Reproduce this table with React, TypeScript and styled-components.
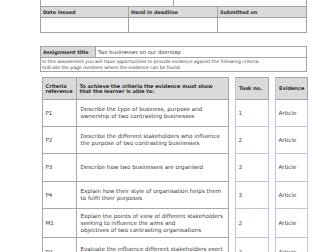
import React from 'react';
import styled, { createGlobalStyle } from 'styled-components';

const GlobalStyle = createGlobalStyle`
    html, body {
        margin: 0;
        padding: 0;
        background: #ffffff;
    }
    body {
        font-family: 'DejaVu Sans', Verdana, 'Liberation Sans', sans-serif;
        color: #333333;
        overflow: hidden;
    }
`;

interface ICriteria {
    code: string;
    text: string[];
    task: string;
    evidence: string;
}

const criteria: ICriteria[] = [
    { code: 'P1', text: ['Describe the type of business, purpose and', 'ownership of two contrasting businesses'], task: '1', evidence: 'Article' },
    { code: 'P2', text: ['Describe the different stakeholders who influence', 'the purpose of two contrasting businesses'], task: '2', evidence: 'Article' },
    { code: 'P3', text: ['Describe how two businesses are organised'], task: '3', evidence: 'Article' },
    { code: 'P4', text: ['Explain how their style of organisation helps them', 'to fulfil their purposes'], task: '3', evidence: 'Article' },
    {
        code: 'M1',
        text: ['Explain the points of view of different stakeholders', 'seeking to influence the aims and', 'objectives of two contrasting organisations'],
        task: '2',
        evidence: 'Article',
    },
    { code: 'D1', text: ['Evaluate the influence different stakeholders exert', 'on a business'], task: '2', evidence: 'Article' },
];

const ROWS = '22px 27px 27px 28px 27px 29px 30px';

export default function App() {
    return (
        <Page>
            <GlobalStyle />
            <FormGrid cols="133px 133px" rows="7px">
                <FormCell />
                <FormCell />
            </FormGrid>
            <FormGrid cols="88px 89px 89px" rows="11px 15px">
                <FormCell head>Date issued</FormCell>
                <FormCell head>Hand in deadline</FormCell>
                <FormCell head>Submitted on</FormCell>
                <FormCell />
                <FormCell />
                <FormCell />
            </FormGrid>

            <AssignmentBox>
                <AssignmentLabel>Assignment title</AssignmentLabel>
                <AssignmentValue>Two businesses on our doorstep</AssignmentValue>
                <AssignmentNote>
                    In this assessment you will have opportunities to provide evidence against the following criteria.
                    <br />
                    Indicate the page numbers where the evidence can be found.
                </AssignmentNote>
            </AssignmentBox>

            <CriteriaArea>
                <CriteriaGrid cols="34px 152px" tone="gray">
                    <HeadCell>
                        Criteria
                        <br />
                        reference
                    </HeadCell>
                    <HeadCell>
                        To achieve the criteria the evidence must show
                        <br />
                        that the learner is able to:
                    </HeadCell>
                    {criteria.map((c) => (
                        <React.Fragment key={c.code}>
                            <BodyCell tone="gray">{c.code}</BodyCell>
                            <BodyCell tone="gray" wide>
                                {c.text.map((line) => (
                                    <span key={line}>{line}</span>
                                ))}
                            </BodyCell>
                        </React.Fragment>
                    ))}
                </CriteriaGrid>
                <CriteriaGrid cols="33px" tone="lavender">
                    <HeadCell center>Task no.</HeadCell>
                    {criteria.map((c) => (
                        <BodyCell key={c.code} tone="lavender">
                            {c.task}
                        </BodyCell>
                    ))}
                </CriteriaGrid>
                <CriteriaGrid cols="32px" tone="lavender">
                    <HeadCell center>Evidence</HeadCell>
                    {criteria.map((c) => (
                        <BodyCell key={c.code} tone="lavender">
                            {c.evidence}
                        </BodyCell>
                    ))}
                </CriteriaGrid>
            </CriteriaArea>
        </Page>
    );
}

const Page = styled.div`
    width: 336px;
    height: 252px;
    padding-left: 40px;
    box-sizing: border-box;
    overflow: hidden;
`;

const FormGrid = styled.div<{ cols: string; rows: string }>`
    display: grid;
    grid-template-columns: ${({ cols }) => cols};
    grid-template-rows: ${({ rows }) => rows};
    width: max-content;
    border-left: 1px solid #a3a3a3;
`;

const FormCell = styled.div<{ head?: boolean }>`
    border-right: 1px solid #a3a3a3;
    border-bottom: 1px solid #a3a3a3;
    background: ${({ head }) => (head ? '#dadada' : '#ffffff')};
    font-size: 4.9px;
    font-weight: bold;
    line-height: 10px;
    padding-left: 2px;
    color: #2e2e2e;
    white-space: nowrap;
`;

const AssignmentBox = styled.div`
    display: grid;
    grid-template-columns: 55px 211px;
    grid-template-rows: 11px 14px;
    width: max-content;
    margin-top: 13px;
    border-top: 1px solid #a3a3a3;
    border-left: 1px solid #a3a3a3;
`;

const AssignmentLabel = styled.div`
    background: #dadada;
    border-right: 1px solid #a3a3a3;
    border-bottom: 1px solid #a3a3a3;
    font-size: 4.9px;
    font-weight: bold;
    line-height: 10px;
    padding-left: 2px;
    color: #2e2e2e;
    white-space: nowrap;
`;

const AssignmentValue = styled.div`
    border-right: 1px solid #a3a3a3;
    border-bottom: 1px solid #a3a3a3;
    font-size: 5.2px;
    line-height: 10px;
    padding-left: 2px;
    color: #404040;
`;

const AssignmentNote = styled.div`
    grid-column: 1 / span 2;
    border-right: 1px solid #a3a3a3;
    border-bottom: 1px solid #a3a3a3;
    font-size: 4.5px;
    line-height: 6.5px;
    padding: 0.5px 0 0 1px;
    color: #484848;
    white-space: nowrap;
`;

const CriteriaArea = styled.div`
    display: flex;
    align-items: flex-start;
    gap: 6px;
    margin-top: 5px;
    margin-left: 2px;
`;

const borderTone = {
    gray: '#a8a8a8',
    lavender: '#c2c2dc',
};

const CriteriaGrid = styled.div<{ cols: string; tone: 'gray' | 'lavender' }>`
    display: grid;
    grid-template-columns: ${({ cols }) => cols};
    grid-template-rows: ${ROWS};
    border-top: 1px solid #a3a3a3;
    border-left: 1px solid ${({ tone }) => borderTone[tone]};
`;

const HeadCell = styled.div<{ center?: boolean }>`
    display: flex;
    align-items: center;
    background: #dadada;
    border-right: 1px solid #a3a3a3;
    border-bottom: 1px solid #a3a3a3;
    padding-left: ${({ center }) => (center ? '3px' : '2.5px')};
    font-size: 5px;
    font-weight: bold;
    line-height: 4.8px;
    color: #2e2e2e;
    white-space: nowrap;
`;

const BodyCell = styled.div<{ tone: 'gray' | 'lavender'; wide?: boolean }>`
    display: flex;
    flex-direction: column;
    justify-content: center;
    border-right: 1px solid ${({ tone }) => borderTone[tone]};
    border-bottom: 1px solid ${({ tone }) => borderTone[tone]};
    padding-left: ${({ wide }) => (wide ? '3.5px' : '2.5px')};
    font-size: 5.6px;
    line-height: 7px;
    color: #404040;
    white-space: nowrap;
`;
